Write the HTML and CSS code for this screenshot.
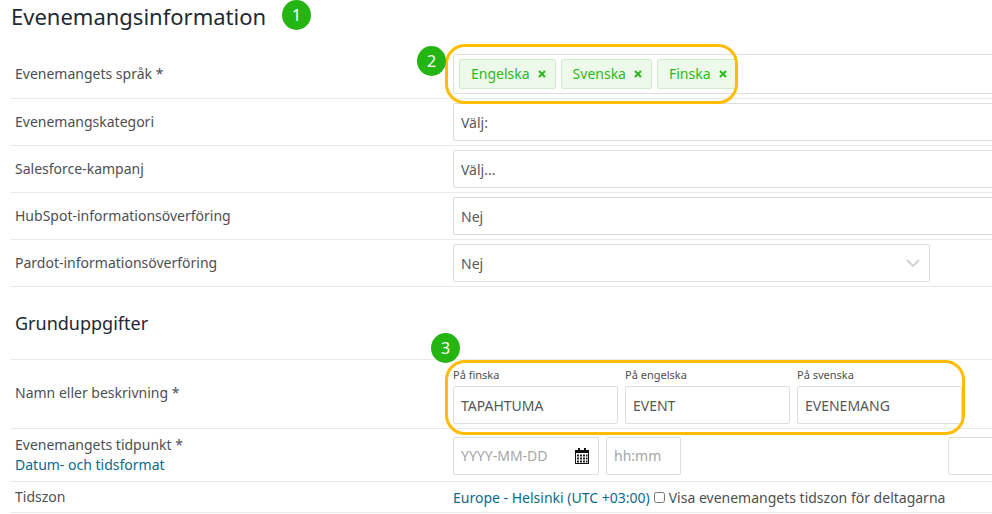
FILE: index.html
```html
<!DOCTYPE html>
<html lang="sv">
<head>
<meta charset="utf-8">
<title>Evenemangsinformation</title>
<link rel="stylesheet" href="styles.css">
</head>
<body>
<main class="page">
  <h1 class="title">Evenemangsinformation</h1>

  <section class="rows">
    <div class="row row-tags">
      <div class="label">Evenemangets språk *</div>
      <div class="field box tags">
        <span class="tag">Engelska <svg class="tag-x" viewBox="0 0 8 8"><path d="M1 1l6 6M7 1L1 7"/></svg></span>
        <span class="tag">Svenska <svg class="tag-x" viewBox="0 0 8 8"><path d="M1 1l6 6M7 1L1 7"/></svg></span>
        <span class="tag">Finska <svg class="tag-x" viewBox="0 0 8 8"><path d="M1 1l6 6M7 1L1 7"/></svg></span>
      </div>
    </div>
    <div class="row">
      <div class="label">Evenemangskategori</div>
      <div class="field box">Välj:</div>
    </div>
    <div class="row">
      <div class="label">Salesforce-kampanj</div>
      <div class="field box">Välj...</div>
    </div>
    <div class="row">
      <div class="label">HubSpot-informationsöverföring</div>
      <div class="field box">Nej</div>
    </div>
    <div class="row">
      <div class="label">Pardot-informationsöverföring</div>
      <div class="field box select">Nej
        <svg class="chevron" viewBox="0 0 14 8"><path d="M1 1l6 6 6-6"/></svg>
      </div>
    </div>
  </section>

  <h2 class="subtitle">Grunduppgifter</h2>

  <section class="rows rows-top">
    <div class="row row-names">
      <div class="label label-names">Namn eller beskrivning *</div>
      <div class="names">
        <div class="name"><div class="small">På finska</div><div class="box">TAPAHTUMA</div></div>
        <div class="name"><div class="small">På engelska</div><div class="box">EVENT</div></div>
        <div class="name"><div class="small">På svenska</div><div class="box">EVENEMANG</div></div>
      </div>
    </div>
    <div class="row row-time">
      <div class="label label-time">Evenemangets tidpunkt *<a class="link link-block">Datum- och tidsformat</a></div>
      <div class="times">
        <div class="box date placeholder">YYYY-MM-DD
          <svg class="calendar" viewBox="0 0 14 16">
            <path d="M0 2h14v14H0z" fill="#111"/>
            <path d="M3 0h2v3H3zM9 0h2v3H9z" fill="#111"/>
            <path d="M1 5h12v10H1z" fill="#fff"/>
            <path d="M2 6.500h2v2H2zM5 6.500h2v2H5zM8 6.500h2v2H8zM11 6.500h1.500v2H11zM2 9.500h2v2H2zM5 9.500h2v2H5zM8 9.500h2v2H8zM11 9.500h1.500v2H11zM2 12.500h2v2H2zM5 12.500h2v2H5zM8 12.500h2v2H8zM11 12.500h1.500v2H11z" fill="#222"/>
          </svg>
        </div>
        <div class="box time placeholder">hh:mm</div>
        <div class="box extra"></div>
      </div>
    </div>
    <div class="row row-zone">
      <div class="label">Tidszon</div>
      <div class="zone">
        <a class="link">Europe - Helsinki (UTC +03:00)</a>
        <input class="check" type="checkbox">
        <span>Visa evenemangets tidszon för deltagarna</span>
      </div>
    </div>
  </section>
</main>

<div class="frame frame-tags"></div>
<div class="frame frame-names"></div>
<div class="badge badge-1">1</div>
<div class="badge badge-2">2</div>
<div class="badge badge-3">3</div>
</body>
</html>
```

FILE: styles.css
```css
html, body {
  margin: 0;
  padding: 0;
  height: 514px;
  overflow: hidden;
  background: #fff;
}

body {
  position: relative;
  font-family: "Noto Sans", sans-serif;
  font-size: 14px;
  color: #4d4f52;
}

.page {
  padding-left: 11px;
  width: 991px;
}

.title {
  margin: 0;
  height: 49px;
  padding-top: 1px;
  box-sizing: border-box;
  font-size: 22px;
  line-height: 30px;
  font-weight: 400;
  color: #1e2a33;
}

.subtitle {
  margin: 0;
  height: 72px;
  padding: 22px 0 0 4px;
  box-sizing: border-box;
  font-size: 18px;
  line-height: 28px;
  font-weight: 400;
  color: #1e2a33;
}

.rows-top {
  border-top: 1px solid #e9e9e9;
}

.row {
  display: flex;
  align-items: center;
  box-sizing: border-box;
  height: 47px;
  padding-left: 4px;
  border-bottom: 1px solid #e9e9e9;
}

.row-tags { height: 50px; }
.row-names { height: 69px; }
.row-time { height: 53px; }
.row-zone { height: 31px; }

.label {
  flex: 0 0 438px;
  line-height: 20px;
}

.label-names { margin-top: -2px; }
.label-time { margin-top: -1px; }

.link {
  color: #0b6a8e;
}

.link-block {
  display: block;
}

.box {
  box-sizing: border-box;
  height: 38px;
  padding: 0 7px;
  display: flex;
  align-items: center;
  background: #fff;
  border: 1px solid #dedede;
  border-radius: 2px;
  color: #55585c;
}

.field {
  flex: 1;
  margin-right: -6px;
}

.select {
  flex: 0 0 477px;
  margin-right: 0;
  justify-content: space-between;
}

.chevron {
  width: 14px;
  height: 8px;
  margin-right: 2px;
  fill: none;
  stroke: #d2d2d2;
  stroke-width: 2;
}

.tags {
  height: 40px;
  gap: 5px;
  padding: 0 5px;
}

.tag {
  display: flex;
  align-items: center;
  gap: 8px;
  box-sizing: border-box;
  height: 30px;
  padding: 0 9px 0 11px;
  background: #edf9ea;
  border: 1px solid #cdeec8;
  border-radius: 2px;
  color: #2fb81e;
}

.tag-x {
  width: 8px;
  height: 8px;
  fill: none;
  stroke: #2fb81e;
  stroke-width: 2;
}

.names {
  display: flex;
  gap: 7px;
  margin-top: 4px;
}

.name {
  width: 165px;
}

.small {
  font-size: 11px;
  line-height: 14px;
  margin-bottom: 4px;
}

.times {
  display: flex;
  flex: 1;
  gap: 7px;
  margin-top: 1px;
}

.date {
  width: 146px;
  justify-content: space-between;
}

.time {
  width: 75px;
}

.extra {
  margin-left: auto;
  width: 60px;
  margin-right: -6px;
}

.placeholder {
  color: #a6a6a6;
}

.calendar {
  width: 14px;
  height: 16px;
  margin-right: 2px;
}

.zone {
  display: flex;
  align-items: center;
  white-space: nowrap;
}

.check {
  width: 11px;
  height: 11px;
  margin: 1px 4px 0 4px;
}

.frame {
  position: absolute;
  box-sizing: border-box;
  border: 3px solid #ffbc00;
  border-radius: 20px;
}

.frame-tags {
  left: 445px;
  top: 44px;
  width: 293px;
  height: 60px;
}

.frame-names {
  left: 445px;
  top: 360px;
  width: 520px;
  height: 75px;
}

.badge {
  position: absolute;
  width: 29px;
  height: 30px;
  border-radius: 50%;
  background: #25b513;
  color: #fff;
  font-size: 16px;
  line-height: 30px;
  text-align: center;
}

.badge-1 { left: 282px; top: 0; }
.badge-2 { left: 417px; top: 46px; }
.badge-3 { left: 431px; top: 333px; }
```
